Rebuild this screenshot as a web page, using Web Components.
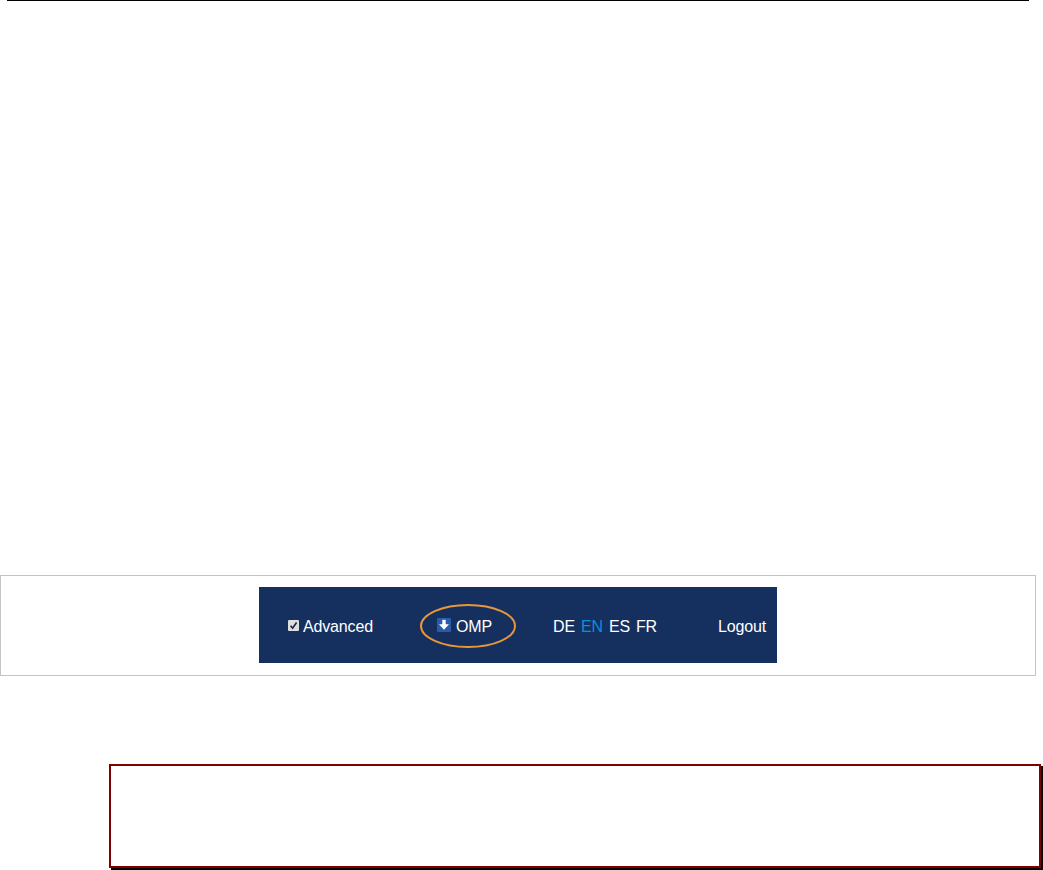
<!DOCTYPE html>
<html lang="en"><head><meta charset="utf-8"><title>OMP</title>
<style>html,body{margin:0;padding:0;background:#fff}body{font-family:"Liberation Sans",Arial,sans-serif;width:1043px;height:870px;overflow:hidden}</style>
</head><body>
<doc-page>
  <nav-panel>
    <nav-bar>
      <adv-check slot="advanced">Advanced</adv-check>
      <omp-link slot="omp">OMP</omp-link>
      <lang-list slot="langs"></lang-list>
      <span slot="logout">Logout</span>
    </nav-bar>
  </nav-panel>
  <note-box></note-box>
</doc-page>
<script>
function def(name, html){
  customElements.define(name, class extends HTMLElement{
    constructor(){super();this.attachShadow({mode:'open'}).innerHTML=html;}
  });
}
def('doc-page',`<style>:host{display:block}
.rule{height:1px;background:#000;margin:0 14px 0 7px}
.stack{display:flex;flex-direction:column}
</style><div class="rule"></div><div class="stack"><slot></slot></div>`);
def('nav-panel',`<style>:host{display:flex;justify-content:center;box-sizing:border-box;width:1036px;height:101px;margin-top:574px;padding-top:11px;border:1px solid #c4c4c4}</style><slot></slot>`);
def('nav-bar',`<style>:host{display:flex;align-items:center;box-sizing:border-box;width:518px;height:76px;padding:0 0 0 29px;background:#15305f;color:#fff;font-size:16px;letter-spacing:-.15px}
.a{width:134px}.o{width:131px}.l{width:165px}.r{display:block;padding-top:3px}</style>
<div class="a r"><slot name="advanced"></slot></div><div class="o r"><slot name="omp"></slot></div><div class="l r"><slot name="langs"></slot></div><div class="r"><slot name="logout"></slot></div>`);
def('adv-check',`<style>:host{display:flex;align-items:center;gap:4px}
svg{display:block;flex:none;margin-bottom:2px}</style>
<svg width="11" height="11" viewBox="0 0 11 11"><rect width="11" height="11" rx="1" fill="#dedede"/><path d="M2.6 5.8 4.6 8.2 8.6 2.4" fill="none" stroke="#1b2a44" stroke-width="1.7"/></svg><slot></slot>`);
def('omp-link',`<style>:host{display:flex;align-items:center;gap:5px;position:relative;margin-left:15px}
.ic{display:block;flex:none;margin-bottom:4px}
.ring{display:block;position:absolute;left:-17px;top:-14px}</style>
<svg class="ic" width="14" height="14" viewBox="0 0 14 14"><rect width="14" height="14" rx="1" fill="#2a5ba6"/><path d="M7 1.8V7" stroke="#fff" stroke-width="3.4"/><path d="M2 6.2H12L7 11.8Z" fill="#fff"/></svg><slot></slot>
<svg class="ring" width="96" height="44" viewBox="0 0 96 44"><ellipse cx="48" cy="22" rx="47" ry="21" fill="none" stroke="#e8963a" stroke-width="2"/></svg>`);
def('lang-list',`<style>:host{display:flex;gap:6px}.on{color:#0a8ede}</style><span>DE</span><span class="on">EN</span><span>ES</span><span>FR</span>`);
def('note-box',`<style>:host{display:block;box-sizing:border-box;width:932px;height:104px;margin:88px 0 0 109px;border:2px solid #800000;background:#fff;box-shadow:2px 2px 0 #000}</style>`);
</script>
</body></html>
